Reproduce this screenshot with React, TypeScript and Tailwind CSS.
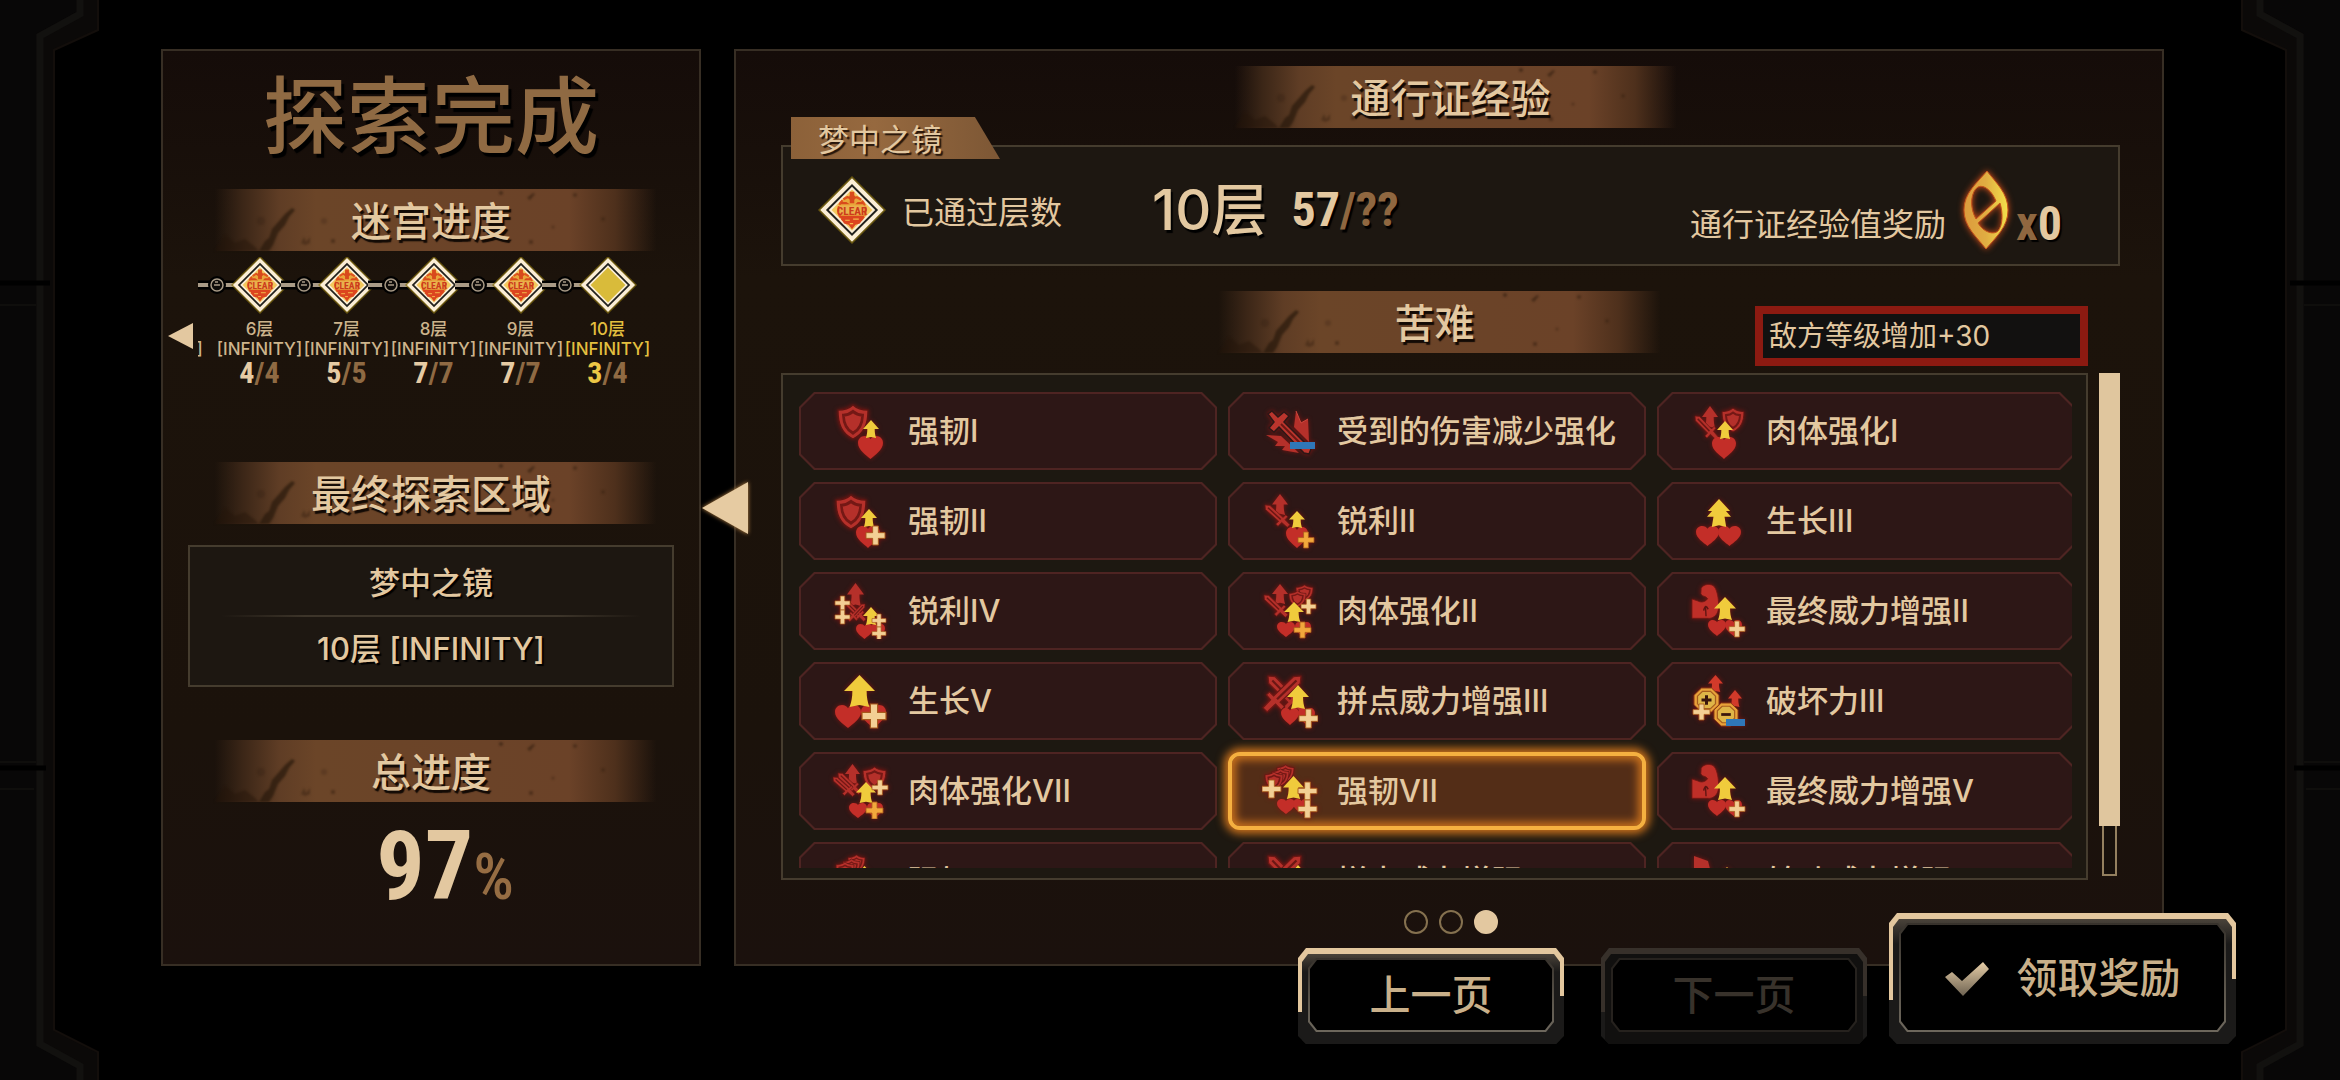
import { useState, type ReactNode } from "react";
import clsx from "clsx";

const CREAM = "#f3cf94";
const ORANGE = "#f2a83c";
const RED = "#b5302a";
const YELLOW = "#f0cb3c";

type BoxProps = { x: number; y: number; w: number; h: number };

// every glyph is drawn in a 0..10 box and placed with x/y/w/h
function Glyph({ x, y, w, h, children }: BoxProps & { children: ReactNode }) {
  return (
    <svg x={x} y={y} width={w} height={h} viewBox="0 0 10 10" preserveAspectRatio="none" overflow="visible">
      {children}
    </svg>
  );
}

function Heart(p: BoxProps) {
  return (
    <Glyph {...p}>
      <path
        d="M5 10C3.2 8.2 0 6 0 3 0 1.200 1.200 0 2.700 0 3.800 0 4.600.6 5 1.400 5.400.6 6.200 0 7.300 0 8.800 0 10 1.200 10 3 10 6 6.800 8.200 5 10Z"
        fill="#c32e28"
      />
    </Glyph>
  );
}

function Arrow({ color = YELLOW, ...p }: BoxProps & { color?: string }) {
  return (
    <Glyph {...p}>
      <path d="M5 0 10 5H7.300C7.300 7 7.600 8.500 8.200 10L5 9.400 1.800 10C2.400 8.500 2.700 7 2.700 5H0Z" fill={color} />
    </Glyph>
  );
}

function DoubleArrow(p: BoxProps) {
  return (
    <Glyph {...p}>
      <path
        d="M5 0 9.600 4.300H7.900L10 6.300H7.300L8 10 5 9.400 2 10 2.700 6.300H0L2.100 4.300H.4Z"
        fill={YELLOW}
      />
    </Glyph>
  );
}

function Plus({ color = CREAM, ...p }: BoxProps & { color?: string }) {
  return (
    <Glyph {...p}>
      <path
        d="M3.500 0H6.500V3.500H10V6.500H6.500V10H3.500V6.500H0V3.500H3.500Z"
        fill={color}
        stroke="#a85a1c"
        strokeWidth=".5"
      />
    </Glyph>
  );
}

function Minus(p: BoxProps) {
  return (
    <Glyph {...p}>
      <rect width="10" height="10" fill="#2f77b8" />
    </Glyph>
  );
}

function Shield(p: BoxProps) {
  return (
    <Glyph {...p}>
      <path
        d="M5 0C6.200 1 8 1.500 10 1.500 10 5.500 8.800 8.300 5 10 1.200 8.300 0 5.500 0 1.500 2 1.500 3.800 1 5 0Z"
        fill={RED}
        stroke="#5e1512"
        strokeWidth=".4"
      />
      <path
        d="M5 1.900C5.900 2.600 7 2.900 8.200 3 8.100 5.500 7.300 7.200 5 8.300 2.700 7.200 1.900 5.500 1.800 3 3 2.900 4.100 2.600 5 1.900Z"
        fill="#b5302a"
        stroke="#741815"
        strokeWidth=".9"
      />
    </Glyph>
  );
}

// blade starts top left, grip ends bottom right
function Sword({ flip, ...p }: BoxProps & { flip?: boolean }) {
  return (
    <Glyph {...p}>
      <g transform={flip ? "translate(10 0) scale(-1 1)" : undefined}>
        <path
          d="M0 0 2 .2 7.200 5.400 8.300 4.300 9.100 5.100 8 6.400 10 8.600 8.900 9.700 6.700 7.600 5.200 9.200 4.300 8.300 5.500 7.100.2 2Z"
          fill={RED}
          stroke="#6b1714"
          strokeWidth=".3"
        />
        <path d="M1.200 1.200 6.300 6.300" stroke="#6b1714" strokeWidth=".6" />
      </g>
    </Glyph>
  );
}

function Arm(p: BoxProps) {
  return (
    <Glyph {...p}>
      <path
        d="M3.400 1.200C4.200 0 7 -.3 8.300.8 9.400 2 10 4.500 9.800 7 9.600 9 7.500 10 5.800 9.800H0V4.300L2 4.800C3.400 5.400 4.800 5.200 5.800 4.200 5 3.200 3.800 3.800 3.300 2.800Z"
        fill="#bf2f28"
        stroke="#6b1714"
        strokeWidth=".25"
      />
      <path d="M5 6.400 5.200 9.200M4.300 7.600Q5 5.500 6 7.200" stroke="#5e1512" strokeWidth=".5" fill="none" />
    </Glyph>
  );
}

function Coin({ minus, ...p }: BoxProps & { minus?: boolean }) {
  return (
    <Glyph {...p}>
      <path d="M3 0H7L10 3V7L7 10H3L0 7V3Z" fill="#e9a23a" stroke="#8a3a14" strokeWidth=".4" />
      <path d="M3.400 1.400H6.600L8.600 3.400V6.600L6.600 8.600H3.400L1.400 6.600V3.400Z" fill="#dfb548" stroke="#a65d1e" strokeWidth=".5" />
      <path d={minus ? "M3 5H7" : "M3 5H7M5 3V7"} stroke="#3a150c" strokeWidth="1.200" />
    </Glyph>
  );
}

const finalPowerIcon = (
  <>
    <Arm x={1} y={1} w={27} h={35} />
    <Heart x={17} y={37} w={18} h={16} />
    <Heart x={34} y={37} w={17} h={16} />
    <Arrow x={23} y={14} w={22} h={23} />
    <Plus x={38} y={38} w={16} h={16} />
  </>
);

const clashIcon = (
  <>
    <Sword x={6} y={3} w={36} h={37} />
    <Sword flip x={1} y={3} w={38} h={37} />
    <Heart x={19} y={35} w={18} h={17} />
    <Heart x={36} y={35} w={17} h={17} />
    <Arrow x={25} y={12} w={22} h={24} />
    <Plus x={37} y={36} w={19} h={19} />
  </>
);

const shieldStack = (
  <>
    <Shield x={15} y={2} w={17} h={17} />
    <Shield x={10} y={6} w={17} h={17} />
    <Shield x={3} y={9} w={18} h={18} />
  </>
);

type Affliction = { name: string; icon: ReactNode; selected?: boolean };

const afflictions: Affliction[] = [
  {
    name: "强韧I",
    icon: (
      <>
        <Shield x={5} y={2} w={30} h={34} />
        <Heart x={25} y={33} w={25} h={23} />
        <Arrow x={30} y={17} w={16} h={18} />
      </>
    ),
  },
  {
    name: "受到的伤害减少强化",
    icon: (
      <>
        <path d="M34 8 39 20 46 16 47 39 32 24Z" fill={RED} />
        <path d="M4 32 19 33 37 50 20 47 23 43 13 43 16 39Z" fill={RED} />
        <path d="M34 8 39 20 46 16" stroke="#d0473d" fill="none" />
        <path
          d="M6 11 10 8 16 14 22 9 27 13 22 19 49 46 47 51 42 50 17 24 12 29 7 25 12 19Z"
          fill="#bb352d"
          stroke="#2d1716"
          strokeWidth="1.500"
        />
        <path d="M19 21 42 44" stroke="#6b1714" strokeWidth="2" />
        <Minus x={28} y={39} w={25} h={7} />
      </>
    ),
  },
  {
    name: "肉体强化I",
    icon: (
      <>
        <Arrow color={RED} x={11} y={3} w={16} h={22} />
        <Sword x={4} y={13} w={23} h={24} />
        <Shield x={31} y={5} w={22} h={24} />
        <Heart x={21} y={34} w={24} h={22} />
        <Arrow x={26} y={18} w={16} h={18} />
      </>
    ),
  },
  {
    name: "强韧II",
    icon: (
      <>
        <Shield x={3} y={2} w={30} h={34} />
        <Heart x={23} y={33} w={24} h={22} />
        <Arrow x={28} y={16} w={16} h={18} />
        <Plus x={33} y={33} w={19} h={19} />
      </>
    ),
  },
  {
    name: "锐利II",
    icon: (
      <>
        <Arrow color={RED} x={10} y={1} w={16} h={21} />
        <Sword x={3} y={12} w={25} h={23} />
        <Heart x={24} y={34} w={22} h={21} />
        <Arrow x={27} y={18} w={16} h={17} />
        <Plus color={ORANGE} x={36} y={39} w={16} h={16} />
      </>
    ),
  },
  {
    name: "生长III",
    icon: (
      <>
        <Heart x={5} y={33} w={23} h={20} />
        <Heart x={27} y={33} w={23} h={20} />
        <DoubleArrow x={16} y={6} w={24} h={28} />
      </>
    ),
  },
  {
    name: "锐利IV",
    icon: (
      <>
        <Arrow color={RED} x={14} y={0} w={17} h={23} />
        <Sword x={13} y={19} w={20} h={20} />
        <Sword flip x={15} y={21} w={17} h={18} />
        <Heart x={23} y={41} w={17} h={15} />
        <Heart x={38} y={41} w={14} h={14} />
        <Arrow x={30} y={24} w={16} h={18} />
        <Plus x={2} y={13} w={15} h={14} />
        <Plus x={2} y={27} w={15} h={14} />
        <Plus x={39} y={31} w={14} h={13} />
        <Plus x={39} y={44} w={14} h={13} />
      </>
    ),
  },
  {
    name: "肉体强化II",
    icon: (
      <>
        <Arrow color={RED} x={10} y={1} w={16} h={20} />
        <Sword x={2} y={12} w={24} h={23} />
        <Shield x={34} y={2} w={17} h={16} />
        <Shield x={27} y={8} w={17} h={16} />
        <Heart x={15} y={39} w={18} h={15} />
        <Heart x={33} y={39} w={16} h={15} />
        <Arrow x={22} y={19} w={20} h={20} />
        <Plus x={39} y={16} w={15} h={15} />
        <Plus color={ORANGE} x={32} y={39} w={17} h={16} />
      </>
    ),
  },
  { name: "最终威力增强II", icon: finalPowerIcon },
  {
    name: "生长V",
    icon: (
      <>
        <Heart x={2} y={32} w={26} h={23} />
        <Heart x={28} y={32} w={25} h={23} />
        <Arrow x={11} y={2} w={31} h={32} />
        <Plus x={29} y={31} w={24} h={24} />
      </>
    ),
  },
  { name: "拼点威力增强III", icon: clashIcon },
  {
    name: "破坏力III",
    icon: (
      <>
        <Arrow color="#d23a2a" x={17} y={2} w={15} h={17} />
        <Arrow color="#d23a2a" x={37} y={17} w={14} h={17} />
        <Coin x={3} y={15} w={25} h={24} />
        <Coin minus x={23} y={30} w={24} h={23} />
        <Plus x={2} y={31} w={17} h={16} />
        <Minus x={35} y={46} w={19} h={7} />
      </>
    ),
  },
  {
    name: "肉体强化VII",
    icon: (
      <>
        <Arrow color={RED} x={12} y={1} w={15} h={20} />
        <Sword x={5} y={10} w={23} h={22} />
        <Sword x={0} y={14} w={22} h={20} />
        <Shield x={30} y={4} w={23} h={23} />
        <Heart x={16} y={40} w={18} h={15} />
        <Heart x={34} y={40} w={16} h={15} />
        <Arrow x={23} y={19} w={20} h={21} />
        <Plus x={39} y={17} w={16} h={15} />
        <Plus color={ORANGE} x={33} y={39} w={17} h={17} />
      </>
    ),
  },
  {
    name: "强韧VII",
    selected: true,
    icon: (
      <>
        {shieldStack}
        <Heart x={15} y={36} w={18} h={15} />
        <Heart x={31} y={36} w={17} h={15} />
        <Arrow x={21} y={13} w={21} h={23} />
        <Plus x={0} y={17} w={19} h={18} />
        <Plus x={36} y={19} w={19} h={18} />
        <Plus x={36} y={37} w={19} h={18} />
      </>
    ),
  },
  { name: "最终威力增强V", icon: finalPowerIcon },
  {
    name: "强韧",
    icon: (
      <>
        {shieldStack}
        <Arrow x={21} y={13} w={21} h={23} />
      </>
    ),
  },
  { name: "拼点威力增强", icon: clashIcon },
  {
    name: "转动威力增强",
    icon: (
      <>
        <path d="M3 3 17 8 21 24 3 30Z" fill={RED} />
        <Arrow x={25} y={14} w={22} h={23} />
      </>
    ),
  },
];

const floors = [
  { floor: 5, mode: "HARD", done: 4, total: 4 },
  { floor: 6, mode: "INFINITY", done: 4, total: 4 },
  { floor: 7, mode: "INFINITY", done: 5, total: 5 },
  { floor: 8, mode: "INFINITY", done: 7, total: 7 },
  { floor: 9, mode: "INFINITY", done: 7, total: 7 },
  { floor: 10, mode: "INFINITY", done: 3, total: 4, current: true },
];

function ClearBadge({ empty, className }: { empty?: boolean; className?: string }) {
  return (
    <svg viewBox="0 0 60 60" className={className} aria-hidden="true">
      <path d="M30 0 60 30 30 60 0 30Z" fill="#8a7410" opacity=".7" />
      <path d="M30 2 58 30 30 58 2 30Z" fill="#fbeed6" />
      <path d="M30 7 53 30 30 53 7 30Z" fill="#20201c" />
      <path d="M30 9.500 50.500 30 30 50.500 9.500 30Z" fill="#fbeed6" />
      <path d="M30 12 48 30 30 48 12 30Z" fill={empty ? "#d9bb3a" : "#f3c85c"} />
      {!empty && (
        <>
          <circle cx="30" cy="30" r="12" fill="#e8a63a" stroke="#e0541f" strokeWidth="2" strokeDasharray="5 1" />
          <path d="M28 14h4v4h3l-3 3v3h-4v-3l-3-3h3Z" fill="#d84a1c" />
          <path d="M20 23h5l3 2h5l2-2h5v2H20Z" fill="#d84a1c" />
          <path d="M19 35h22l-4 7-4 1-3 4-3-4-4-1Z" fill="#dc451f" />
          <path d="M24 39h4M31 38h5M28 42h3" stroke="#f3b84c" strokeWidth="1" />
          <rect x="19" y="26" width="22" height="8" fill="#eab04c" />
          <text
            x="30"
            y="34"
            textAnchor="middle"
            fontFamily="Roboto Condensed, Liberation Sans, sans-serif"
            fontWeight="700"
            fontSize="10"
            fill="#cc3a1c"
          >
            CLEAR
          </text>
        </>
      )}
    </svg>
  );
}

function Banner({ children }: { children: ReactNode }) {
  return (
    <div className="relative flex h-[62px] w-[460px] items-center justify-center self-center bg-[linear-gradient(90deg,transparent_3%,#3b2617_9%,#5f3d25_17%,#6b4528_25%,#6b4228_80%,#4e301c_90%,transparent_99%)]">
      <svg viewBox="0 0 460 62" className="absolute inset-0 size-full blur-[1px]" aria-hidden="true">
        <g fill="#241509">
          <path d="M58 62 64 52 68 49 71 40 78 32 84 25 91 19 94 21 88 28 84 36 77 44 72 56 68 62Z" opacity=".65" />
          <path d="M14 62 24 46 34 54 44 50 54 58 58 62Z" opacity=".45" />
          <path d="M100 54l3-6 2 5 4-5v6l-5 2Z" opacity=".35" />
          <circle cx="123" cy="32" r="3" opacity=".2" />
          <circle cx="60" cy="32" r="4" opacity=".2" />
          <circle cx="132" cy="52" r="2" opacity=".45" />
          <circle cx="300" cy="4" r="2" opacity=".5" />
          <path d="M326 9l6-5 2 1-5 6Z" opacity=".5" />
          <circle cx="374" cy="6" r="2" opacity=".4" />
          <circle cx="330" cy="53" r="2" opacity=".45" />
          <circle cx="352" cy="38" r="1.500" opacity=".35" />
          <circle cx="402" cy="30" r="2" opacity=".3" />
        </g>
      </svg>
      <h2 className="relative pt-1 text-[40px] leading-[48px] font-medium [text-shadow:2px_3px_1px_#120a05]">
        {children}
      </h2>
    </div>
  );
}

function FloorNode({ floor, mode, done, total, current }: (typeof floors)[number]) {
  return (
    <li className={clsx("flex w-[87px] shrink-0 flex-col items-center", current ? "text-[#e3bf3f]" : "text-[#cdb48c]")}>
      <svg viewBox="0 0 87 56" className="h-14 w-[87px] overflow-visible" aria-hidden="true">
        <path d="M-22 28H20" stroke="#000" strokeWidth="9" />
        <path d="M-22 28H20" stroke="#a89a86" strokeWidth="4" />
        <circle cx="1" cy="28" r="9" fill="#000" />
        <circle cx="1" cy="28" r="6" fill="#0d0b09" stroke="#a89a86" strokeWidth="1.500" />
        <path d="M-2 28H4M-1 25h3" stroke="#a89a86" strokeWidth="1.500" />
        <svg x="15" y="-1" width="58" height="58" viewBox="0 0 58 58">
          <ClearBadge empty={current} />
        </svg>
      </svg>
      <span className="mt-1.5 text-[17px] leading-5 font-medium">{floor}层</span>
      <span className="text-[17px] leading-5 font-medium">[{mode}]</span>
      <span className="font-[Roboto_Condensed,Liberation_Sans_Narrow,Liberation_Sans,sans-serif] text-[30px] leading-7 font-bold">
        <span className={current ? "text-[#ecc645]" : "text-[#e6cba4]"}>{done}</span>
        <span className="text-[#8f6a43]">/{total}</span>
      </span>
    </li>
  );
}

function AfflictionCard({ name, icon, active, onSelect }: Affliction & { active: boolean; onSelect: () => void }) {
  return (
    <button
      type="button"
      aria-pressed={active}
      onClick={onSelect}
      className={clsx(
        "relative block h-[78px] w-full text-left",
        active
          ? "z-10 rounded-xl border-4 border-[#f5b040] bg-[#532d17] shadow-[0_0_8px_4px_#c8701c,inset_0_0_8px_4px_#c8701c]"
          : "bg-[#4e2422] p-0.5 [clip-path:polygon(15px_0,calc(100%-15px)_0,100%_15px,100%_calc(100%-15px),calc(100%-15px)_100%,15px_100%,0_calc(100%-15px),0_15px)]",
      )}
    >
      <span
        className={clsx(
          "flex size-full items-center gap-[19px]",
          active
            ? "pl-[30px]"
            : "bg-[#2d1716] pl-8 [clip-path:polygon(14px_0,calc(100%-14px)_0,100%_14px,100%_calc(100%-14px),calc(100%-14px)_100%,14px_100%,0_calc(100%-14px),0_14px)]",
        )}
      >
        <svg viewBox="0 0 56 56" className="size-14 shrink-0 drop-shadow-[0_0_2px_#7d1512]" aria-hidden="true">
          {icon}
        </svg>
        <span className="text-[31px] leading-10 font-medium whitespace-nowrap">{name}</span>
      </span>
    </button>
  );
}

function FrameButton({
  children,
  disabled,
  className,
  onClick,
}: {
  children: ReactNode;
  disabled?: boolean;
  className: string;
  onClick?: () => void;
}) {
  return (
    <button
      type="button"
      disabled={disabled}
      onClick={onClick}
      className={clsx(
        "relative bg-[#1b1a19] px-[10px] pt-[10px] pb-3 [clip-path:polygon(8px_0,calc(100%-8px)_0,100%_10px,100%_calc(100%-8px),calc(100%-8px)_100%,8px_100%,0_calc(100%-8px),0_10px)]",
        className,
      )}
    >
      <span className={clsx("absolute top-0 left-0 h-2/3 w-1/2", disabled ? "bg-[#37302a]" : "bg-[#e3c79e]")} />
      <span className={clsx("absolute top-0 right-0 h-1/2 w-1/2", disabled ? "bg-[#37302a]" : "bg-[#e3c79e]")} />
      <span
        className={clsx(
          "absolute inset-x-[4px] top-[6px] bottom-0 [clip-path:polygon(6px_0,calc(100%-6px)_0,100%_8px,100%_100%,0_100%,0_8px)]",
          disabled ? "bg-[#11100f]" : "bg-[linear-gradient(#4a433a,#1b1a19_20%)]",
        )}
      />
      <span
        className={clsx(
          "relative block size-full p-0.5 [clip-path:polygon(8px_0,calc(100%-8px)_0,100%_10px,100%_calc(100%-10px),calc(100%-8px)_100%,8px_100%,0_calc(100%-10px),0_10px)]",
          disabled ? "bg-[#26221e]" : "bg-[linear-gradient(#37322c,#5d574d_60%,#6d675c)]",
        )}
      >
        <span className="flex size-full items-center justify-center gap-7 bg-black pt-0.5 text-[41px] font-medium [clip-path:polygon(7px_0,calc(100%-7px)_0,100%_9px,100%_calc(100%-9px),calc(100%-7px)_100%,7px_100%,0_calc(100%-9px),0_9px)]">
          {children}
        </span>
      </span>
    </button>
  );
}

function WallFrame({ className }: { className: string }) {
  return (
    <svg
      viewBox="0 0 100 1080"
      preserveAspectRatio="none"
      className={clsx("absolute inset-y-0 h-full w-[100px]", className)}
      aria-hidden="true"
    >
      <path d="M0 0H99V30L54 50V1030L99 1052V1080H0Z" fill="#0b0908" />
      <path d="M0 0H80V10L36 34V1046L80 1068V1080H0Z" fill="#080707" />
      <path d="M80 0V14L40 36V1044L80 1066V1080" fill="none" stroke="#12110f" strokeWidth="7" />
      <path d="M98 0V30L54 50V1030L98 1052V1080" fill="none" stroke="#130e0b" strokeWidth="2" />
      <path d="M0 283H50M0 768H46" stroke="#000" strokeWidth="5" />
      <path d="M0 305H36M0 789H34M0 762H36" stroke="#0f0e0c" strokeWidth="2" />
    </svg>
  );
}

export default function App() {
  const [selected, setSelected] = useState(afflictions.findIndex((a) => a.selected));
  const [page, setPage] = useState(2);

  return (
    <div className="relative min-h-screen overflow-hidden bg-black pb-9 font-[Inter,Noto_Sans_CJK_SC,sans-serif] text-[#e3c8a0]">
      <WallFrame className="left-0" />
      <WallFrame className="right-0 -scale-x-100" />

      <main className="relative flex gap-[33px] pt-[49px] pr-[176px] pl-[161px]">
        <section className="flex w-[540px] shrink-0 flex-col border-2 border-[#372e24] bg-[linear-gradient(#150c09,#1c130b_25%,#1b120b_75%,#1b110d)] pt-6">
          <h1 className="text-center text-[84px] leading-[84px] font-medium text-[#8f6a43] [text-shadow:3px_4px_1px_#000]">
            探索完成
          </h1>

          <div className="mt-[30px] flex flex-col">
            <Banner>迷宫进度</Banner>
            <div className="mt-1.5 flex items-center pr-12 pl-[5px]">
              <button type="button" aria-label="上一层" className="mt-[28px] mr-[5px] shrink-0">
                <svg viewBox="0 0 25 28" className="h-7 w-[25px]">
                  <path d="M0 14 25 1V27Z" fill="#e3c8a0" />
                </svg>
              </button>
              <ol className="flex min-w-0 flex-1 justify-end overflow-hidden">
                {floors.map((f) => (
                  <FloorNode key={f.floor} {...f} />
                ))}
              </ol>
            </div>
          </div>

          <div className="mt-[75px] flex flex-col">
            <Banner>最终探索区域</Banner>
            <div className="mx-[25px] mt-[21px] flex flex-col items-center border-2 border-[#453c2e] bg-[#1d1711] py-3 text-[31px] leading-[48px] font-medium [text-shadow:2px_2px_1px_#000]">
              <p>梦中之镜</p>
              <hr className="my-2 h-0.5 w-[420px] border-0 bg-[linear-gradient(90deg,transparent,#3d352a_20%,#3d352a_80%,transparent)]" />
              <p>10层 [INFINITY]</p>
            </div>
          </div>

          <div className="mt-[53px] flex flex-col">
            <Banner>总进度</Banner>
            <p className="mt-5 pl-7 text-center font-[Roboto_Condensed,Liberation_Sans_Narrow,Liberation_Sans,sans-serif] text-[96px] leading-[88px] font-bold">
              97<span className="text-[64px] font-medium text-[#966d43]">%</span>
            </p>
          </div>
        </section>

        <section className="relative flex min-w-0 flex-1 flex-col border-2 border-[#372e24] bg-[linear-gradient(#150c09,#1c130b_25%,#1b120b_75%,#1b110d)] pt-[15px] pr-[42px] pb-[30px] pl-[45px]">
          <button type="button" aria-label="收起" className="absolute top-[430px] -left-[34px]">
            <svg viewBox="0 0 48 54" className="h-[54px] w-12 drop-shadow-[0_0_2px_#c08a4a]">
              <path d="M0 27 46 1V53Z" fill="#e6cba2" />
            </svg>
          </button>

          <Banner>通行证经验</Banner>

          <div className="relative mt-[17px] flex h-[121px] items-center border-2 border-[#453c2e] bg-[#1d1711] pt-2 pr-14 pl-[35px]">
            <h3 className="absolute -top-[30px] left-2 h-[42px] bg-[linear-gradient(90deg,#8c6139,#96693f_40%,#7d5735)] pt-0.5 pr-[58px] pl-[27px] text-[31px] leading-[42px] font-normal [clip-path:polygon(0_0,88%_0,100%_100%,0_100%)] [text-shadow:2px_2px_1px_#24150a]">
              梦中之镜
            </h3>
            <ClearBadge className="size-[68px]" />
            <span className="mt-1.5 ml-4 text-[32px] leading-10">已通过层数</span>
            <span className="ml-[90px] text-[56px] leading-[64px] font-medium [text-shadow:2px_3px_1px_#000]">10层</span>
            <span className="ml-6 font-[Roboto_Condensed,Liberation_Sans_Narrow,Liberation_Sans,sans-serif] text-[48px] leading-[64px] font-bold [text-shadow:2px_3px_1px_#000]">
              57<span className="text-[#8f6740]">/??</span>
            </span>
            <span className="mt-[30px] ml-auto text-[32px] leading-10">通行证经验值奖励</span>
            <svg viewBox="0 0 48 82" className="ml-4 h-[82px] w-12 drop-shadow-[0_0_3px_#d8501a]" aria-hidden="true">
              <defs>
                <linearGradient id="pass" x1="0" x2="1">
                  <stop offset="0" stopColor="#dd9a3c" />
                  <stop offset=".5" stopColor="#e0ad42" />
                  <stop offset="1" stopColor="#f3e04a" />
                </linearGradient>
              </defs>
              <path
                fillRule="evenodd"
                d="M25 2C34 14 46 24 46 41 46 58 34 68 24 80 15 68 2 58 2 41 2 24 15 14 25 2ZM16 18C9 22 7 38 14 50L34 32C30 22 22 15 16 18ZM38 34 16 54C22 64 32 66 36 62 41 56 41 44 38 34Z"
                fill="url(#pass)"
                stroke="#c4541c"
                strokeWidth="1"
              />
            </svg>
            <span className="mt-7 ml-1.5 font-[Roboto_Condensed,Liberation_Sans_Narrow,Liberation_Sans,sans-serif] text-[48px] leading-[48px] font-bold [text-shadow:2px_2px_1px_#000]">
              <span className="text-[#8f6740]">x</span>0
            </span>
          </div>

          <div className="mt-[25px] mr-8 grid h-[82px] grid-cols-[1fr_auto_1fr]">
            <div className="col-start-2 flex flex-col">
              <Banner>苦难</Banner>
            </div>
            <p className="mb-[7px] w-[333px] self-end justify-self-end border-8 border-[#8c1a11] bg-[#121110] px-1.5 text-[28px] leading-[44px]">
              敌方等级增加+30
            </p>
          </div>

          <div className="flex gap-[11px]">
            <div className="min-w-0 flex-1 border-2 border-[#453c2e] bg-[#1d1811] pt-[17px] pr-3.5 pb-2.5 pl-4">
              <div className="h-[476px] overflow-hidden">
                <ul className="grid w-[calc(100%+3px)] grid-cols-3 gap-x-[11px] gap-y-3">
                  {afflictions.map((a, i) => (
                    <li key={a.name}>
                      <AfflictionCard {...a} active={i === selected} onSelect={() => setSelected(i)} />
                    </li>
                  ))}
                </ul>
              </div>
            </div>
            <div className="flex w-[21px] flex-col items-center" aria-hidden="true">
              <div className="w-full grow-[19] bg-[#e0c69e]" />
              <div className="mb-1 w-[15px] grow-[2] border-2 border-t-0 border-[#94805f] bg-[#17100b]" />
            </div>
          </div>

          <div className="mt-[30px] flex justify-center gap-[11px]">
            {[0, 1, 2].map((n) => (
              <button
                key={n}
                type="button"
                aria-label={`第${n + 1}页`}
                onClick={() => setPage(n)}
                className={clsx("size-6 rounded-full border-2", n === page ? "border-[#e3c8a0] bg-[#e3c8a0]" : "border-[#85714f]")}
              />
            ))}
          </div>
        </section>
      </main>

      <footer className="relative -mt-[53px] flex items-end justify-end pr-[104px]">
        <FrameButton className="h-24 w-[266px]" onClick={() => setPage(Math.max(0, page - 1))}>
          <span className="text-[#c9b08a]">上一页</span>
        </FrameButton>
        <FrameButton
          className="ml-[37px] h-24 w-[266px]"
          disabled={page === 2}
          onClick={() => setPage(Math.min(2, page + 1))}
        >
          <span className={page === 2 ? "text-[#38322b]" : "text-[#c9b08a]"}>下一页</span>
        </FrameButton>
        <FrameButton className="ml-[22px] h-[131px] w-[347px]">
          <svg viewBox="0 0 44 34" className="h-[34px] w-11" aria-hidden="true">
            <defs>
              <linearGradient id="tick" x1="0" x2="0" y1="0" y2="1">
                <stop offset="0" stopColor="#e6cda6" />
                <stop offset="1" stopColor="#6e6352" />
              </linearGradient>
            </defs>
            <path d="M0 15 7 10 17 19 38 0 44 7 18 34Z" fill="url(#tick)" />
          </svg>
          <span className="text-[#c9b08a]">领取奖励</span>
        </FrameButton>
      </footer>
    </div>
  );
}
